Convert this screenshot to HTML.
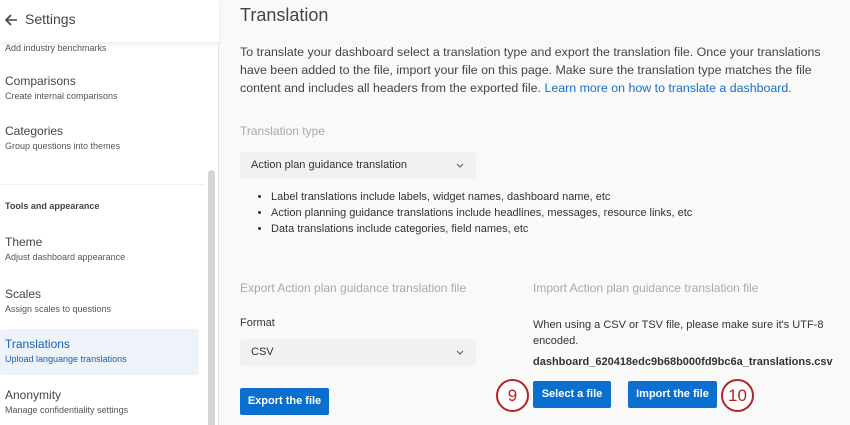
<!DOCTYPE html>
<html><head><style>
*{margin:0;padding:0;box-sizing:border-box}
body{width:850px;height:425px;overflow:hidden;background:#f9f9f9;font-family:"Liberation Sans",sans-serif;color:#333;position:relative}
.side{position:absolute;left:0;top:0;width:219px;height:425px;background:#fff;border-right:1px solid #e6e6e6}
.hdr{position:absolute;left:0;top:0;width:219px;height:42px;background:#fff;box-shadow:0 2px 4px rgba(0,0,0,.08);z-index:2}
.hdr span{position:absolute;left:25px;top:11px;font-size:14px;color:#444}
.it{position:absolute;left:5px}
.it b{display:block;font-weight:normal;font-size:12px;color:#444}
.it i{display:block;font-style:normal;font-size:9px;color:#555;margin-top:3px}
.sb{position:absolute;left:208px;top:170px;width:7px;height:255px;background:#d4d4d4;border-radius:4px 4px 0 0}
.a{position:absolute}
.p{font-size:12.4px;line-height:18px;color:#444}
.lbl{font-size:12px;color:#aaa}
.sel{background:#f1f1f1;border-radius:3px;font-size:11px;color:#333;height:27px;line-height:27px;padding-left:11px}
.sel svg{position:absolute;left:216px;top:11px}
.btn{background:#0b6fd0;color:#fff;font-size:11px;font-weight:bold;text-align:center;border-radius:2px;height:27px;line-height:27px}
.circ{position:absolute;border:2px solid #b52227;border-radius:50%;width:33px;height:33px;color:#b52227;font-size:17px;text-align:center;line-height:29px;background:#fff}
ul{font-size:11px;color:#333;line-height:16px;padding-left:31px}
</style></head><body>
<div class="side">
<div class="hdr"><svg style="position:absolute;left:4px;top:13px" width="14" height="14" viewBox="0 0 14 14"><path d="M13 7H2M7 2L2 7l5 5" fill="none" stroke="#444" stroke-width="1.6"/></svg><span>Settings</span></div>
<div class="it" style="top:40px"><i style="font-size:9px">Add industry benchmarks</i></div>
<div class="it" style="top:74px"><b>Comparisons</b><i>Create internal comparisons</i></div>
<div class="it" style="top:124px"><b>Categories</b><i>Group questions into themes</i></div>
<div style="position:absolute;left:0;top:184px;width:205px;border-top:1px solid #f0f0f0"></div>
<div class="it" style="top:201px;font-size:9px;font-weight:bold;color:#444">Tools and appearance</div>
<div class="it" style="top:235px"><b>Theme</b><i>Adjust dashboard appearance</i></div>
<div class="it" style="top:287px"><b>Scales</b><i>Assign scales to questions</i></div>
<div style="position:absolute;left:0;top:329px;width:199px;height:46px;background:#eef3fa;border-radius:3px"></div>
<div class="it" style="top:337px"><b style="color:#1a5fb4">Translations</b><i style="color:#1a5fb4">Upload languange translations</i></div>
<div class="it" style="top:388px"><b>Anonymity</b><i>Manage confidentiality settings</i></div>
<div class="sb"></div>
</div>
<div class="a" style="left:240px;top:5px;font-size:18px;color:#444">Translation</div>
<div class="a p" style="left:240px;top:43px;width:600px">To translate your dashboard select a translation type and export the translation file. Once your translations have been added to the file, import your file on this page. Make sure the translation type matches the file content and includes all headers from the exported file. <span style="color:#1a6fc9">Learn more on how to translate a dashboard.</span></div>
<div class="a lbl" style="left:240px;top:124px">Translation type</div>
<div class="a sel" style="left:240px;top:152px;width:236px">Action plan guidance translation<svg width="8" height="6" viewBox="0 0 8 6"><path d="M1 1l3 3 3-3" fill="none" stroke="#666" stroke-width="1.2"/></svg></div>
<ul class="a" style="left:240px;top:189px"><li>Label translations include labels, widget names, dashboard name, etc</li><li>Action planning guidance translations include headlines, messages, resource links, etc</li><li>Data translations include categories, field names, etc</li></ul>
<div class="a lbl" style="left:240px;top:281px">Export Action plan guidance translation file</div>
<div class="a" style="left:240px;top:317px;font-size:11px;color:#333">Format</div>
<div class="a sel" style="left:240px;top:339px;width:236px">CSV<svg width="8" height="6" viewBox="0 0 8 6"><path d="M1 1l3 3 3-3" fill="none" stroke="#666" stroke-width="1.2"/></svg></div>
<div class="a btn" style="left:240px;top:388px;width:89px">Export the file</div>
<div class="a lbl" style="left:533px;top:281px">Import Action plan guidance translation file</div>
<div class="a" style="left:533px;top:317px;font-size:11px;line-height:16px;color:#333;width:300px">When using a CSV or TSV file, please make sure it's UTF-8 encoded.</div>
<div class="a" style="left:533px;top:356px;font-size:11px;font-weight:bold;color:#333">dashboard_620418edc9b68b000fd9bc6a_translations.csv</div>
<div class="a btn" style="left:533px;top:381px;width:78px">Select a file</div>
<div class="a btn" style="left:628px;top:381px;width:89px">Import the file</div>
<div class="circ" style="left:496px;top:379px">9</div>
<div class="circ" style="left:721px;top:379px">10</div>
</body></html>
